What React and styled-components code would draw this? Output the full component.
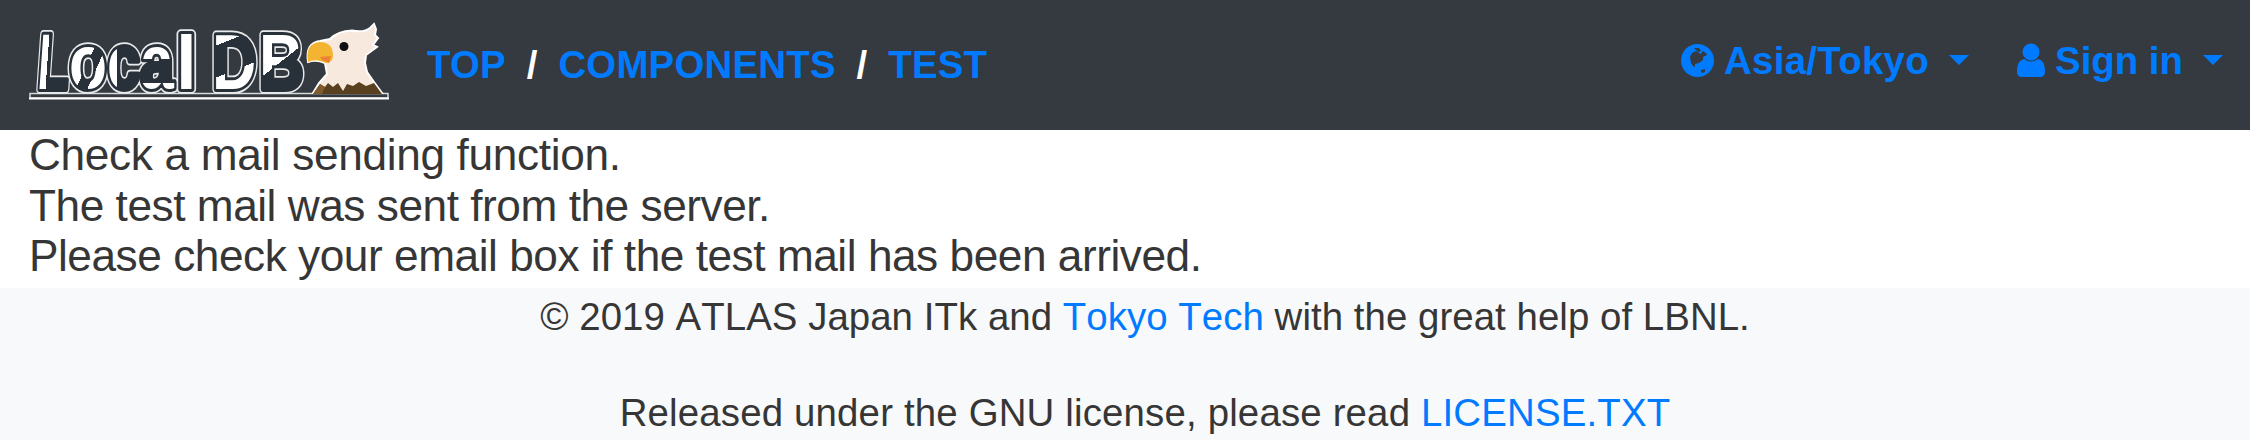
import React from 'react';
import styled, { createGlobalStyle } from 'styled-components';

const GlobalStyle = createGlobalStyle`
  body { margin: 0; background: #fff; color: #363636; font-family: "Liberation Sans", Arial, sans-serif; }
  * { box-sizing: border-box; }
  a { color: #007bff; text-decoration: none; }
`;
const Navbar = styled.nav`
  display: flex; align-items: flex-start; height: 130px; background: #343a40;
  padding: 20px 27px 0 29px; font-size: 38.4px; font-weight: 700; line-height: 57.6px;
`;
const Brand = styled.a`display: block; width: 360px; height: 80px; svg { display: block; overflow: visible; }`;
const Crumbs = styled.div`display: flex; margin: 16px 0 0 38px; white-space: pre; color: #fff; letter-spacing: 0.22px;`;
const Separator = styled.span`padding: 0 20.8px;`;
const Menus = styled.div`display: flex; gap: 48px; margin: 12px 0 0 auto;`;
const MenuLink = styled.a`
  display: flex; align-items: center; white-space: pre; letter-spacing: ${(p) => p.$tracking || 0}px;
  svg { margin-right: 10px; display: block; }
`;
const Caret = styled.span`
  margin: -1px 0 0 20px; border: 10px solid transparent; border-top: 10px solid #007bff; border-bottom: 0;
`;
const Message = styled.main`
  height: 158px; padding-left: 29px; font-size: 44.2px; line-height: 50.6px; letter-spacing: -0.46px;
  p { margin: 0; }
  p:first-child { letter-spacing: -0.34px; }
`;
const Footer = styled.footer`
  height: 152px; overflow: hidden; background: #f8f9fa; padding-left: 40px;
  text-align: center; font-size: 38.4px; line-height: 57.6px; font-kerning: none;
`;
const FooterLine = styled.p`
  margin: 0 0 38.4px; letter-spacing: ${(p) => p.$tracking}px;
`;

const letters = [
  { c: 'L', x: 7, y: 69, sx: 0.66, skew: -4, size: 79, fill: 'url(#stem)' },
  { c: 'o', x: 40, y: 68, sx: 0.82, size: 76, fill: 'url(#ring)' },
  { c: 'c', x: 78, y: 68, sx: 0.78, size: 76, fill: 'url(#stem)' },
  { c: 'a', x: 111, y: 68, sx: 0.8, size: 76, fill: 'url(#low)' },
  { c: 'l', x: 147, y: 69, sx: 0.98, size: 76, fill: '#fff' },
  { c: 'D', x: 183, y: 69, sx: 0.79, size: 78, fill: 'url(#patches)' },
  { c: 'B', x: 230, y: 69, sx: 0.79, size: 78, fill: 'url(#mixed)' },
];

function Logo() {
  const glyph = (l, props) => (
    <text key={l.c} transform={`translate(${l.x} ${l.y}) skewX(${l.skew || 0}) scale(${l.sx} 1)`} fontSize={l.size}
      fontFamily="Liberation Sans" fontWeight="700" strokeLinejoin="round" {...props}>{l.c}</text>
  );
  return (
    <svg width="360" height="80" viewBox="0 0 360 80">
      <defs>
        <linearGradient id="stem">
          <stop offset=".3" stopColor="#fff" /><stop offset=".3" stopColor="#28313a" />
        </linearGradient>
        <linearGradient id="ring" x2="1" y2="1">
          <stop offset=".5" stopColor="#fff" /><stop offset=".5" stopColor="#28313a" />
          <stop offset=".65" stopColor="#28313a" /><stop offset=".65" stopColor="#fff" />
        </linearGradient>
        <linearGradient id="low" x2="0" y2="1">
          <stop offset=".46" stopColor="#fff" /><stop offset=".46" stopColor="#28313a" />
          <stop offset=".75" stopColor="#28313a" /><stop offset=".75" stopColor="#fff" />
        </linearGradient>
        <linearGradient id="patches" x2=".2" y2="1">
          <stop offset=".32" stopColor="#fff" /><stop offset=".32" stopColor="#28313a" />
          <stop offset=".67" stopColor="#28313a" /><stop offset=".67" stopColor="#fff" />
          <stop offset=".9" stopColor="#fff" /><stop offset=".9" stopColor="#28313a" />
        </linearGradient>
        <linearGradient id="mixed" x2=".4" y2="1">
          <stop offset=".6" stopColor="#fff" /><stop offset=".6" stopColor="#28313a" />
        </linearGradient>
      </defs>
      <path d="M1 73.5H359V78H1Z" fill="#343a40" stroke="#d7d9db" strokeWidth="1.5" />
      <path d="M0 78.5H360" stroke="#fff" strokeWidth="2" />
      {letters.map((l) => glyph(l, { fill: '#fff', stroke: '#e9eaeb', strokeWidth: 9.5 }))}
      {letters.map((l) => glyph(l, { fill: l.fill, stroke: '#28313a', strokeWidth: 6, paintOrder: 'stroke' }))}
      <path d="M284 73L290 63L298 54L296 43Q287 39 279 42Q276 23 291 21L301 19Q309 11 323 10.5Q335 13 341 8L345 4L347 9L346 15L349 18L344 25L348 27L337 35L336 43L338 52L345 62L353 73Z" fill="#f8e9df" stroke="#fff" strokeWidth="2" />
      <path d="M279 42Q276 23 291 22Q304 22 304 36Q304 42 297 43Q287 38 279 42Z" fill="#f3b432" />
      <path d="M291 37L302 36L300 43L293 40Z" fill="#ef8134" />
      <path d="M284 74L291 64L296 67L299 63L304 67L309 63L314 71L318 64L324 66L330 62L337 66L345 63L353 74Z" fill="#59401f" />
      <path d="M284 74L291 64L296 67L293 74Z" fill="#805b2d" />
      <circle cx="315" cy="26.5" r="4.5" fill="#111" />
    </svg>
  );
}

const Globe = () => (
  <svg width="33" height="33" viewBox="0 0 33 33">
    <circle cx="16.5" cy="16.5" r="16.5" fill="#007bff" />
    <path d="M11 9L15 7L18 9L20 10L24 9L26 11L22 13L22 16L18 19L14 20L14 23L16 24L12 22L10 19L9 13Z" fill="#343a40" />
    <path d="M13 4L18 4L20 7L17 8ZM20 9L22 7L26 10L24 12Z" fill="#343a40" />
    <path d="M20 28L20 26L24 25L24 28L21 29Z" fill="#343a40" />
  </svg>
);
const User = () => (
  <svg width="28" height="35" viewBox="0 0 28 35">
    <circle cx="14" cy="9" r="8.5" fill="#007bff" />
    <path d="M7 16Q14 21 21 16Q28 17 28 29Q28 34 23 34H5Q0 34 0 29Q0 17 7 16Z" fill="#007bff" />
  </svg>
);

export default function App() {
  return (
    <>
      <GlobalStyle />
      <Navbar>
        <Brand href="#"><Logo /></Brand>
        <Crumbs>
          <a href="#">TOP</a><Separator>/</Separator><a href="#">COMPONENTS</a><Separator>/</Separator><a href="#">TEST</a>
        </Crumbs>
        <Menus>
          <MenuLink href="#" $tracking={0.3}><Globe />Asia/Tokyo<Caret /></MenuLink>
          <MenuLink href="#"><User />Sign in<Caret /></MenuLink>
        </Menus>
      </Navbar>
      <Message>
        <p>Check a mail sending function.</p>
        <p>The test mail was sent from the server.</p>
        <p>Please check your email box if the test mail has been arrived.</p>
      </Message>
      <Footer>
        <FooterLine $tracking={0.05}>© 2019 ATLAS Japan ITk and <a href="#">Tokyo Tech</a> with the great help of LBNL.</FooterLine>
        <FooterLine $tracking={0.17}>Released under the GNU license, please read <a href="#">LICENSE.TXT</a></FooterLine>
      </Footer>
    </>
  );
}
